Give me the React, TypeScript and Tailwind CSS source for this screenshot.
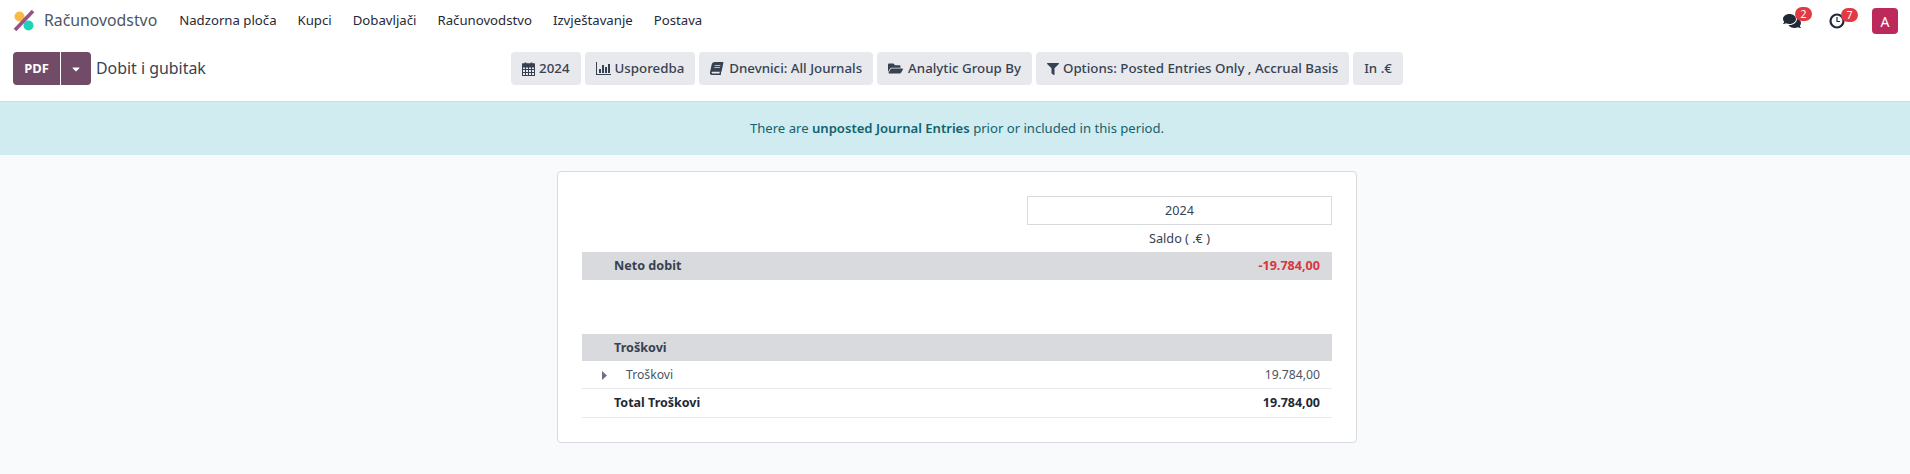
import { FaBook, FaComments, FaFilter, FaFolderOpen, FaCaretDown } from 'react-icons/fa'
import type { ReactNode } from 'react'

const menu = ['Nadzorna ploča', 'Kupci', 'Dobavljači', 'Računovodstvo', 'Izvještavanje', 'Postava']

function CalendarIcon() {
  return (
    <svg width="13" height="14" viewBox="0 0 13 14" fill="none" stroke="currentColor" strokeWidth="1">
      <rect x="0.5" y="2" width="12" height="11.5" />
      <path d="M0.5 2h12v3h-12z" fill="currentColor" />
      <path d="M0.5 7.5h12M0.5 10.5h12M3.5 5v8.5M6.5 5v8.5M9.5 5v8.5" />
      <path d="M3.5 0.5v2.5M9.5 0.5v2.5" strokeWidth="1.6" />
    </svg>
  )
}

function BarsIcon() {
  return (
    <svg width="15" height="13" viewBox="0 0 15 13" fill="currentColor">
      <path d="M0 0h1v12h14v1H0z" />
      <path d="M3 7h2v4H3zM6 3h2v8H6zM9 5h2v6H9zM12 2h2v9h-2z" />
    </svg>
  )
}

function ClockIcon() {
  return (
    <svg width="16" height="16" viewBox="0 0 16 16" fill="none" stroke="#1f2937">
      <circle cx="8" cy="8" r="6.5" strokeWidth="2.2" />
      <path d="M8 4v4.5H11" strokeWidth="1.2" />
    </svg>
  )
}

function Logo() {
  return (
    <svg width="22" height="22" viewBox="0 0 22 22">
      <circle cx="6.5" cy="6.5" r="5" fill="#fbb945" />
      <circle cx="15.5" cy="15.5" r="5" fill="#1ad3bb" />
      <path d="M20 1L2 20" stroke="#985184" strokeWidth="3.6" />
    </svg>
  )
}

function FilterButton({ icon, children }: { icon?: ReactNode; children: ReactNode }) {
  return (
    <button className="flex h-[33px] items-center gap-[4px] rounded-[4px] bg-[#e7e9ed] px-[11px] text-[13.3px] font-medium text-[#374151]">
      {icon}
      <span>{children}</span>
    </button>
  )
}

function Badge({ n }: { n: number }) {
  return (
    <span className="absolute -top-[5px] left-[12px] flex h-[14px] w-[17px] items-center justify-center rounded-full bg-[#e23a45] text-[10.5px] leading-none text-white">
      {n}
    </span>
  )
}

export default function App() {
  return (
    <div className="min-h-[474px] bg-[#f9fafb] font-['Noto_Sans',sans-serif] text-[13px] text-[#374151]">
      <nav className="flex h-[46px] items-center bg-white px-[13px] pb-[4px] pr-[12px]">
        <Logo />
        <span className="ml-[9px] text-[15.8px] text-[#4b5563]">Računovodstvo</span>
        <div className="ml-[22px] flex gap-[21px] text-[13.2px] text-[#1f2937]">
          {menu.map(m => (
            <span key={m}>{m}</span>
          ))}
        </div>
        <div className="ml-auto flex items-center">
          <div className="relative mr-[28px] text-[#1f2937]">
            <FaComments size={18} />
            <Badge n={2} />
          </div>
          <div className="relative mr-[27px]">
            <ClockIcon />
            <Badge n={7} />
          </div>
          <div className="flex h-[26px] w-[26px] items-center justify-center rounded-[4px] bg-[#bb2a5a] text-[14px] text-white">A</div>
        </div>
      </nav>

      <div className="grid h-[56px] grid-cols-[1fr_auto_1fr] items-start border-b border-[#d8dadd] bg-white pl-[13px] pr-[9px] pt-[6px]">
        <div className="flex items-center">
          <button className="flex h-[33px] w-[47px] items-center justify-center rounded-l-[4px] bg-[#714b67] text-[13px] font-bold text-white">PDF</button>
          <button className="ml-px flex h-[33px] w-[30px] items-center justify-center rounded-r-[4px] bg-[#714b67] text-white">
            <FaCaretDown size={12} />
          </button>
          <span className="ml-[5px] text-[15.9px] text-[#374151]">Dobit i gubitak</span>
        </div>
        <div className="flex gap-[4px]">
          <FilterButton icon={<CalendarIcon />}>2024</FilterButton>
          <FilterButton icon={<BarsIcon />}>Usporedba</FilterButton>
          <FilterButton icon={<FaBook size={13} className="mr-[2px] -skew-x-12" />}>Dnevnici: All Journals</FilterButton>
          <FilterButton icon={<FaFolderOpen size={15} className="mr-[1px]" />}>Analytic Group By</FilterButton>
          <FilterButton icon={<FaFilter size={12} />}>Options: Posted Entries Only , Accrual Basis</FilterButton>
          <FilterButton>In .€</FilterButton>
        </div>
        <div />
      </div>

      <div className="flex h-[53px] items-center justify-center bg-[#d0ecf0] pl-[4px] pt-px text-[13.1px] text-[#12626e]">
        <span>
          There are <b className="font-semibold">unposted Journal Entries</b> prior or included in this period.
        </span>
      </div>

      <main className="flex justify-center pl-[4px] pt-[16px]">
        <div className="h-[272px] w-[800px] rounded-[4px] border border-[#d8dadd] bg-white px-[24px] pt-[24px]">
          <div className="ml-auto flex h-[29px] w-[305px] items-center justify-center border border-[#d8dadd] pt-px text-[12.6px]">2024</div>
          <div className="ml-auto flex h-[27px] w-[305px] items-center justify-center text-[12.7px]">Saldo ( .€ )</div>
          <div className="flex h-[28px] items-center justify-between bg-[#d8dadd] pl-[32px] pr-[12px] pt-px text-[12.6px] font-bold">
            <span>Neto dobit</span>
            <span className="text-[#d9363e]">-19.784,00</span>
          </div>
          <div className="h-[54px]" />
          <div className="flex h-[27px] items-center bg-[#d8dadd] pl-[32px] pt-px text-[12.6px] font-bold">Troškovi</div>
          <div className="flex h-[28px] items-center justify-between border-b border-[#e7e9ed] pr-[12px] pt-[2px] text-[12.2px] text-[#4b5563]">
            <span className="flex items-center">
              <svg width="5" height="9" viewBox="0 0 5 9" className="ml-[20px]" fill="#6b7280">
                <path d="M0 0l5 4.5L0 9z" />
              </svg>
              <span className="ml-[19px]">Troškovi</span>
            </span>
            <span>19.784,00</span>
          </div>
          <div className="flex h-[29px] items-center justify-between border-b border-[#e7e9ed] pl-[32px] pr-[12px] text-[12.5px] font-bold text-[#1f2937]">
            <span>Total Troškovi</span>
            <span>19.784,00</span>
          </div>
        </div>
      </main>
    </div>
  )
}
